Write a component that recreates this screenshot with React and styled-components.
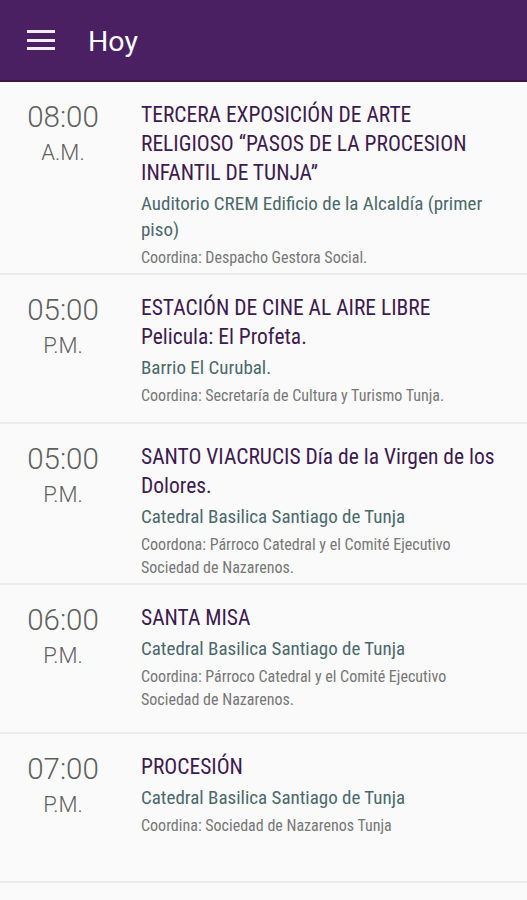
import React from 'react';
import styled, { createGlobalStyle } from 'styled-components';

const GlobalStyle = createGlobalStyle`
  html, body {
    margin: 0;
    padding: 0;
    background: #fafafa;
  }
  body {
    font-family: "Roboto Condensed", "Liberation Sans Narrow", "Roboto", sans-serif;
  }
`;

const Page = styled.div`
  width: 527px;
  min-height: 900px;
  background: #fafafa;
`;

const Toolbar = styled.header`
  height: 80px;
  background: #4a2063;
  border-bottom: 2px solid #3c1552;
  display: flex;
  align-items: center;
  padding-left: 27px;
  gap: 33px;
  box-sizing: content-box;
`;

const MenuButton = styled.div`
  width: 28px;
  height: 20px;
  display: flex;
  flex-direction: column;
  justify-content: space-between;
  span {
    display: block;
    height: 3px;
    background: #f3eef6;
  }
`;

const Title = styled.h1`
  margin: 0;
  font-family: "Roboto", sans-serif;
  font-weight: 400;
  font-size: 28.5px;
  color: #ffffff;
  line-height: 1;
  margin-top: 5px;
`;

const List = styled.ul`
  list-style: none;
  margin: 0;
  padding: 0;
`;

const Row = styled.li`
  display: flex;
  min-height: 149px;
  box-sizing: border-box;
  padding: 18px 20px 4px 0;
  border-bottom: 2px solid #ececec;
`;

const TimeCol = styled.div`
  width: 126px;
  flex-shrink: 0;
  display: flex;
  flex-direction: column;
  align-items: center;
  font-family: "Roboto", sans-serif;
  font-weight: 300;
  color: #5f5f5f;
`;

const Clock = styled.div`
  font-size: 29.5px;
  line-height: 34px;
`;

const Meridiem = styled.div`
  font-size: 22px;
  line-height: 28px;
  margin-top: 5px;
`;

const Info = styled.div`
  flex: 1;
  padding-left: 15px;
`;

const EventName = styled.div`
  font-size: 21.5px;
  line-height: 29px;
  color: #3d1a4f;
`;

const Venue = styled.div`
  font-size: 19px;
  line-height: 26px;
  color: #4b686c;
  margin-top: 4px;
`;

const Coordinator = styled.div`
  font-size: 16px;
  line-height: 23px;
  color: #777;
  margin-top: 3px;
`;

const events = [
  {
    time: '08:00',
    ampm: 'A.M.',
    name: 'TERCERA EXPOSICIÓN DE ARTE RELIGIOSO “PASOS DE LA PROCESION INFANTIL DE TUNJA”',
    venue: 'Auditorio CREM Edificio de la Alcaldía (primer piso)',
    coord: 'Coordina: Despacho Gestora Social.',
  },
  {
    time: '05:00',
    ampm: 'P.M.',
    name: 'ESTACIÓN DE CINE AL AIRE LIBRE Pelicula: El Profeta.',
    venue: 'Barrio El Curubal.',
    coord: 'Coordina: Secretaría de Cultura y Turismo Tunja.',
  },
  {
    time: '05:00',
    ampm: 'P.M.',
    name: 'SANTO VIACRUCIS Día de la Virgen de los Dolores.',
    venue: 'Catedral Basilica Santiago de Tunja',
    coord: 'Coordona: Párroco Catedral y el Comité Ejecutivo Sociedad de Nazarenos.',
  },
  {
    time: '06:00',
    ampm: 'P.M.',
    name: 'SANTA MISA',
    venue: 'Catedral Basilica Santiago de Tunja',
    coord: 'Coordina: Párroco Catedral y el Comité Ejecutivo Sociedad de Nazarenos.',
  },
  {
    time: '07:00',
    ampm: 'P.M.',
    name: 'PROCESIÓN',
    venue: 'Catedral Basilica Santiago de Tunja',
    coord: 'Coordina: Sociedad de Nazarenos Tunja',
  },
];

export default function App() {
  return (
    <Page>
      <GlobalStyle />
      <Toolbar>
        <MenuButton>
          <span />
          <span />
          <span />
        </MenuButton>
        <Title>Hoy</Title>
      </Toolbar>
      <List>
        {events.map((ev, i) => (
          <Row key={i}>
            <TimeCol>
              <Clock>{ev.time}</Clock>
              <Meridiem>{ev.ampm}</Meridiem>
            </TimeCol>
            <Info>
              <EventName>{ev.name}</EventName>
              <Venue>{ev.venue}</Venue>
              <Coordinator>{ev.coord}</Coordinator>
            </Info>
          </Row>
        ))}
      </List>
    </Page>
  );
}
